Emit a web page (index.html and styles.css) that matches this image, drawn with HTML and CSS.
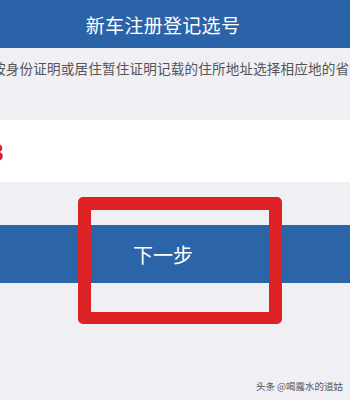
FILE: index.html
```html
<!DOCTYPE html>
<html lang="zh-CN">
    <head>
        <meta charset="UTF-8">
        <title>新车注册登记选号</title>
        <link rel="stylesheet" href="styles.css">
    </head>
    <body>
        <div class="page">
            <div class="topbar">新车注册登记选号</div>
            <div class="tip">按身份证明或居住暂住证明记载的住所地址选择相应地的省份</div>
            <div class="plate-row"><span class="plate-num">3</span></div>
            <div class="next-wrap">
                <button class="next-btn" type="button">下一步</button>
                <div class="mark"></div>
            </div>
            <div class="watermark">头条 @喝露水的道姑</div>
        </div>
    </body>
</html>
```

FILE: styles.css
```css
body { margin: 0; font-family: "Noto Sans CJK SC", "Noto Sans", sans-serif; background: #efeff4; }
.page { position: relative; width: 350px; height: 400px; overflow: hidden; background: #efeff4; }
.topbar { height: 48px; line-height: 50px; background: #2b63a9; color: #fff; font-size: 19px; text-align: center; padding-right: 24px; letter-spacing: 0.3px; }
.tip { margin-left: -8px; padding-top: 9px; height: 72px; box-sizing: border-box; font-size: 13.6px; letter-spacing: 0.15px; line-height: 22px; color: #555; white-space: nowrap; overflow: hidden; }
.plate-row { height: 62px; background: #fff; display: flex; align-items: center; overflow: hidden; }
.plate-num { margin-left: -9px; font-size: 22px; font-weight: bold; color: #d9201f; }
.next-wrap { position: relative; padding-top: 43px; }
.next-btn { display: block; width: 100%; height: 58px; border: 0; padding: 0 24px 0 0; background: #2c64a8; color: #fff; font-family: inherit; font-size: 20px; }
.mark { position: absolute; left: 78px; top: 15px; width: 178px; height: 102px; border: 13px solid #dc2224; border-bottom-width: 12px; border-radius: 5px; }
.watermark { position: absolute; right: 7px; top: 379px; font-size: 9.5px; color: #555; }
```
